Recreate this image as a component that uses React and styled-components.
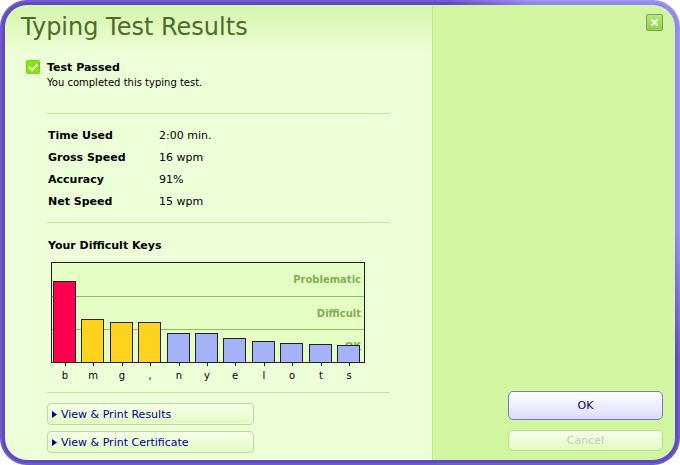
import { useState } from 'react';

import styled, { createGlobalStyle } from "styled-components";



const GlobalStyle = createGlobalStyle`
    * {
        box-sizing: border-box;
    }

    body {
        margin: 0;
        background: #fff;
        color: #000;
        font-family: Verdana, "DejaVu Sans", sans-serif;
        font-size: 11px;
        line-height: 14px;
    }
`;

const Frame = styled.div`
    display: flex;
    min-height: 100vh;
    padding: 5px;
    border-radius: 27px;
    background: radial-gradient(230px 360px at top right, #9088ec 65%, #5f49c4);
    box-shadow: inset 0 0 0 2px rgba(255, 255, 255, 0.1);
`;

const Main = styled.main`
    flex: 1;
    padding: 7px 42px 7px 16px;
    border-radius: 22px 0 0 22px;
    background: linear-gradient(180deg, #d5f4ab, #edffd8 48px);
`;

const Side = styled.aside`
    display: flex;
    flex-direction: column;
    align-items: flex-end;
    width: 243px;
    padding: 9px 12px;
    border-left: 1px solid #c3e698;
    border-radius: 0 22px 22px 0;
    background: #d2f6a0;
`;

const Title = styled.h1`
    margin: 0;
    color: #4f6b28;
    font-size: 24px;
    font-weight: normal;
    line-height: 30px;
`;

const Status = styled.section`
    display: flex;
    align-items: flex-start;
    gap: 6px;
    padding: 18px 0 23px 5px;

    h2 {
        margin: 0;
        font-size: 11px;
        line-height: 16px;
    }

    p {
        margin: 0;
        font-size: 10px;
    }
`;

const Block = styled.section`
    margin-left: 26px;
    padding: ${({ $pad }) => $pad};
    border-top: 1px solid #c5e59b;
`;

const Stats = styled.dl`
    display: grid;
    grid-template-columns: 111px 1fr;
    row-gap: 8px;
    margin: 0;

    dt {
        font-weight: bold;
    }

    dd {
        margin: 0;
    }
`;

const StatRow = styled.div`
    display: contents;
`;

const ChartTitle = styled.h2`
    margin: 0 0 9px;
    font-size: 11px;
`;

const Chart = styled.svg`
    display: block;
    margin-left: 3px;
    font-size: 10px;

    .level {
        fill: #83ae54;
        font-weight: bold;
    }
`;

const Links = styled.div`
    display: flex;
    flex-direction: column;
    gap: 6px;
`;

const PrintButton = styled.button`
    display: flex;
    align-items: center;
    gap: 4px;
    width: 207px;
    height: 22px;
    padding: 1px 4px 0;
    border: 1px solid #bddb92;
    border-radius: 4px;
    background: linear-gradient(180deg, #f8ffec, #e0fcc0);
    box-shadow: inset 0 0 0 1px #f2ffe2;
    color: #00008b;
    font: inherit;
    cursor: pointer;
`;

const CloseButton = styled.button`
    display: flex;
    align-items: center;
    justify-content: center;
    width: 17px;
    height: 17px;
    margin-bottom: auto;
    padding: 0;
    border: 1px solid #869680;
    border-radius: 2px;
    background: linear-gradient(180deg, #b4e878, #90d440);
    cursor: pointer;
`;

const DialogButton = styled.button`
    width: 155px;
    height: ${({ $primary }) => ($primary ? "29px" : "21px")};
    margin-top: ${({ $primary }) => ($primary ? "0" : "10px")};
    padding: 0;
    border: 1px solid ${({ $primary }) => ($primary ? "#7478c0" : "#bddb92")};
    border-radius: 5px;
    background: ${({ $primary }) => ($primary
        ? "linear-gradient(180deg, #fff, #dcdcff)"
        : "linear-gradient(180deg, #f8ffec, #e0fcc0)")};
    color: ${({ $primary }) => ($primary ? "#00008b" : "#c0ccb4")};
    font: inherit;
`;


const statList = [
    {label: "Time Used", value: "2:00 min."},
    {label: "Gross Speed", value: "16 wpm"},
    {label: "Accuracy", value: "91%"},
    {label: "Net Speed", value: "15 wpm"},
];

const levelList = [
    {text: "Problematic", y: 21},
    {text: "Difficult", y: 55},
    {text: "OK", y: 88},
];

const keyList = [
    {name: "b", value: 82, color: "#ff0050"},
    {name: "m", value: 44, color: "#ffd21e"},
    {name: "g", value: 41, color: "#ffd21e"},
    {name: ",", value: 41, color: "#ffd21e"},
    {name: "n", value: 30, color: "#a6b2f8"},
    {name: "y", value: 30, color: "#a6b2f8"},
    {name: "e", value: 25, color: "#a6b2f8"},
    {name: "l", value: 22, color: "#a6b2f8"},
    {name: "o", value: 20, color: "#a6b2f8"},
    {name: "t", value: 19, color: "#a6b2f8"},
    {name: "s", value: 18, color: "#a6b2f8"},
];


function KeyChart() {
    return (
        <Chart width="316" height="120" role="img" aria-label="Your Difficult Keys">
            <rect x="0.5" y="0.5" width="313" height="100" fill="#e5fec4" stroke="#222" />
            <path d="M1 34.5H313M1 67.5H313" stroke="#8ebc62" />
            {levelList.map((level) => (
                <text className="level" x="310" y={level.y} textAnchor="end" key={level.text}>
                    {level.text}
                </text>
            ))}
            {keyList.map((item, i) => {
                const left = Math.round(2 + i * 28.4);    // 막대 왼쪽 위치
                return (
                    <g key={item.name}>
                        <rect
                            x={left + 0.5}
                            y={101.5 - item.value}
                            width="22"
                            height={item.value - 1}
                            fill={item.color}
                            stroke="#222"
                        />
                        <path d={`M${left + 12.5} 101v3`} stroke="#222" />
                        <text x={left + 12} y="117" textAnchor="middle">{item.name}</text>
                    </g>
                );
            })}
            <path d="M0 100.5H314" stroke="#222" />
        </Chart>
    );
}

function PrintLink({ children }) {
    return (
        <PrintButton type="button">
            <svg width="5" height="7" aria-hidden="true">
                <path d="M0 0L5 3.5L0 7Z" fill="#00008b" />
            </svg>
            {children}
        </PrintButton>
    );
}

function App() {
    const [isOpen, setIsOpen] = useState(true);

    // 창 닫기
    const handleClose = () => {
        setIsOpen(false);
    }

    return (
        <>
            <GlobalStyle />
            {
                isOpen &&
                <Frame role="dialog" aria-labelledby="title">
                    <Main>
                        <Title id="title">Typing Test Results</Title>
                        <Status>
                            <svg width="15" height="14" aria-hidden="true">
                                <rect x="0.5" y="0.5" width="13" height="13" rx="1" fill="#84e60a" stroke="#76d010" />
                                <path d="M3 7L6 10L11.5 4.5" fill="none" stroke="#fff" strokeWidth="2" />
                            </svg>
                            <div>
                                <h2>Test Passed</h2>
                                <p>You completed this typing test.</p>
                            </div>
                        </Status>
                        <Block $pad="15px 1px 13px">
                            <Stats>
                                {statList.map((item) => (
                                    <StatRow key={item.label}>
                                        <dt>{item.label}</dt>
                                        <dd>{item.value}</dd>
                                    </StatRow>
                                ))}
                            </Stats>
                        </Block>
                        <Block $pad="16px 1px 10px">
                            <ChartTitle>Your Difficult Keys</ChartTitle>
                            <KeyChart />
                        </Block>
                        <Block $pad="10px 0 0">
                            <Links>
                                <PrintLink>View &amp; Print Results</PrintLink>
                                <PrintLink>View &amp; Print Certificate</PrintLink>
                            </Links>
                        </Block>
                    </Main>
                    <Side>
                        <CloseButton type="button" aria-label="Close" onClick={handleClose}>
                            <svg width="9" height="9" aria-hidden="true">
                                <path d="M1.5 1.5L7.5 7.5M7.5 1.5L1.5 7.5" stroke="#fff" strokeWidth="2" />
                            </svg>
                        </CloseButton>
                        <DialogButton type="button" $primary onClick={handleClose}>OK</DialogButton>
                        <DialogButton type="button" disabled>Cancel</DialogButton>
                    </Side>
                </Frame>
            }
        </>
    );
}

export default App;
